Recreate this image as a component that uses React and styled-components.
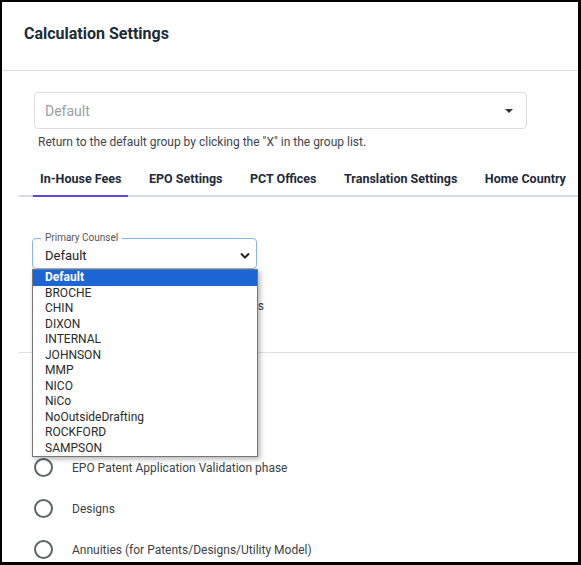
import styled, { createGlobalStyle } from "styled-components"

const GlobalStyle = createGlobalStyle`
    html, body {
        margin: 0;
        padding: 0;
        background: #FFFFFF;
    }
    * {
        box-sizing: border-box;
    }
`

const StyledFrame = styled.div`
    width: 581px;
    height: 565px;
    border-style: solid;
    border-color: #000000;
    border-width: 2px 3px 3px 2px;
    background: #FFFFFF;
    overflow: hidden;
    font-family: "Roboto", "Liberation Sans", sans-serif;
`
const StyledHeader = styled.header`
    height: 69px;
    padding: 22px 22px 0;
    border-bottom: 1px solid #d6dde8;
`
const StyledTitle = styled.h2`
    margin: 0;
    font-size: 16px;
    line-height: 20px;
    font-weight: 700;
    color: #212b36;
`
const StyledBody = styled.section`
    padding: 21px 0 0 17px;
`
const StyledGroupSelect = styled.div`
    margin-left: 15px;
    width: 493px;
    height: 37px;
    border: 1px solid #dcdcdc;
    border-radius: 4px;
    display: flex;
    align-items: center;
    justify-content: space-between;
    padding: 0 13px 0 10px;
    font-size: 14px;
    color: #9aa0a6;
`
const StyledCaret = styled.span`
    width: 0;
    height: 0;
    border-left: 4px solid transparent;
    border-right: 4px solid transparent;
    border-top: 4px solid #333333;
`
const StyledHelper = styled.p`
    margin: 4px 0 0 19px;
    font-size: 12px;
    line-height: 18px;
    color: #3d4450;
`
const StyledTabs = styled.nav`
    margin-top: 9px;
    display: flex;
    gap: 13.5px;
    padding-left: 14px;
    border-bottom: 2px solid #d5dbe5;
`
const StyledTab = styled.div`
    padding: 10px 7px 7px;
    margin-bottom: -2px;
    font-size: 12.5px;
    line-height: 18px;
    font-weight: 700;
    color: #1e2a3b;
    white-space: nowrap;
    border-bottom: 2px solid ${({ $active }) => ($active ? "#5b48e6" : "transparent")};
`
const StyledCounsel = styled.div`
    position: relative;
    margin: 41px 0 0 13px;
    width: 225px;
    height: 31px;
    border: 1px solid #86b6f2;
    border-radius: 4px;
    display: flex;
    align-items: center;
    justify-content: space-between;
    padding: 4px 6px 0 12px;
    font-size: 13px;
    color: #222222;
`
const StyledLegend = styled.span`
    position: absolute;
    top: -7px;
    left: 8px;
    padding: 0 4px;
    background: #FFFFFF;
    font-size: 10px;
    line-height: 12px;
    color: #555555;
`
const StyledOptions = styled.ul`
    position: absolute;
    top: 30px;
    left: -1px;
    width: 226px;
    margin: 0;
    padding: 0;
    list-style: none;
    border: 1px solid #767676;
    background: #FFFFFF;
    box-shadow: 2px 2px 5px rgba(0, 0, 0, 0.3);
    z-index: 2;
`
const StyledOption = styled.li`
    height: 15.5px;
    line-height: 15.5px;
    padding-left: 12px;
    font-size: 12px;
    font-weight: ${({ $selected }) => ($selected ? 700 : 400)};
    color: ${({ $selected }) => ($selected ? "#FFFFFF" : "#2a2a2a")};
    background: ${({ $selected }) => ($selected ? "#1b66d3" : "transparent")};
`
const StyledNote = styled.p`
    margin: 29px 0 0 32px;
    font-size: 12px;
    line-height: 16px;
    color: #3a3f45;
`
const StyledDivider = styled.hr`
    margin: 38px 0 0;
    border: 0;
    border-top: 1px solid #e0e0e0;
`
const StyledRadioList = styled.div`
    margin: 23px 0 0 15px;
    display: flex;
    flex-direction: column;
    gap: 22px;
`
const StyledRadioRow = styled.label`
    display: flex;
    align-items: center;
    gap: 19px;
    font-size: 12px;
    color: #3a3f45;
`
const StyledRadio = styled.span`
    width: 19px;
    height: 19px;
    border: 2px solid #5f6368;
    border-radius: 50%;
    flex-shrink: 0;
`

const tabs = ["In-House Fees", "EPO Settings", "PCT Offices", "Translation Settings", "Home Country"]
const counsels = ["Default", "BROCHE", "CHIN", "DIXON", "INTERNAL", "JOHNSON", "MMP", "NICO", "NiCo", "NoOutsideDrafting", "ROCKFORD", "SAMPSON"]
const feeTypes = ["Patents", "Utility Models", "EPO Patent Application Validation phase", "Designs", "Annuities (for Patents/Designs/Utility Model)"]

const App = () => {
    return (
        <StyledFrame>
            <GlobalStyle />
            <StyledHeader>
                <StyledTitle>Calculation Settings</StyledTitle>
            </StyledHeader>
            <StyledBody>
                <StyledGroupSelect>
                    Default
                    <StyledCaret />
                </StyledGroupSelect>
                <StyledHelper>Return to the default group by clicking the "X" in the group list.</StyledHelper>
                <StyledTabs>
                    {tabs.map((tab, i) => (
                        <StyledTab key={tab} $active={i === 0}>{tab}</StyledTab>
                    ))}
                </StyledTabs>
                <StyledCounsel>
                    <StyledLegend>Primary Counsel</StyledLegend>
                    Default
                    <svg width="10" height="7" viewBox="0 0 10 7">
                        <polyline points="1,1.5 5,5.5 9,1.5" fill="none" stroke="#222" strokeWidth="2" />
                    </svg>
                    <StyledOptions>
                        {counsels.map((name, i) => (
                            <StyledOption key={name} $selected={i === 0}>{name}</StyledOption>
                        ))}
                    </StyledOptions>
                </StyledCounsel>
                <StyledNote>Use the primary counsel fees for all files</StyledNote>
                <StyledDivider />
                <StyledRadioList>
                    {feeTypes.map((type) => (
                        <StyledRadioRow key={type}>
                            <StyledRadio />
                            {type}
                        </StyledRadioRow>
                    ))}
                </StyledRadioList>
            </StyledBody>
        </StyledFrame>
    )
}

export default App
